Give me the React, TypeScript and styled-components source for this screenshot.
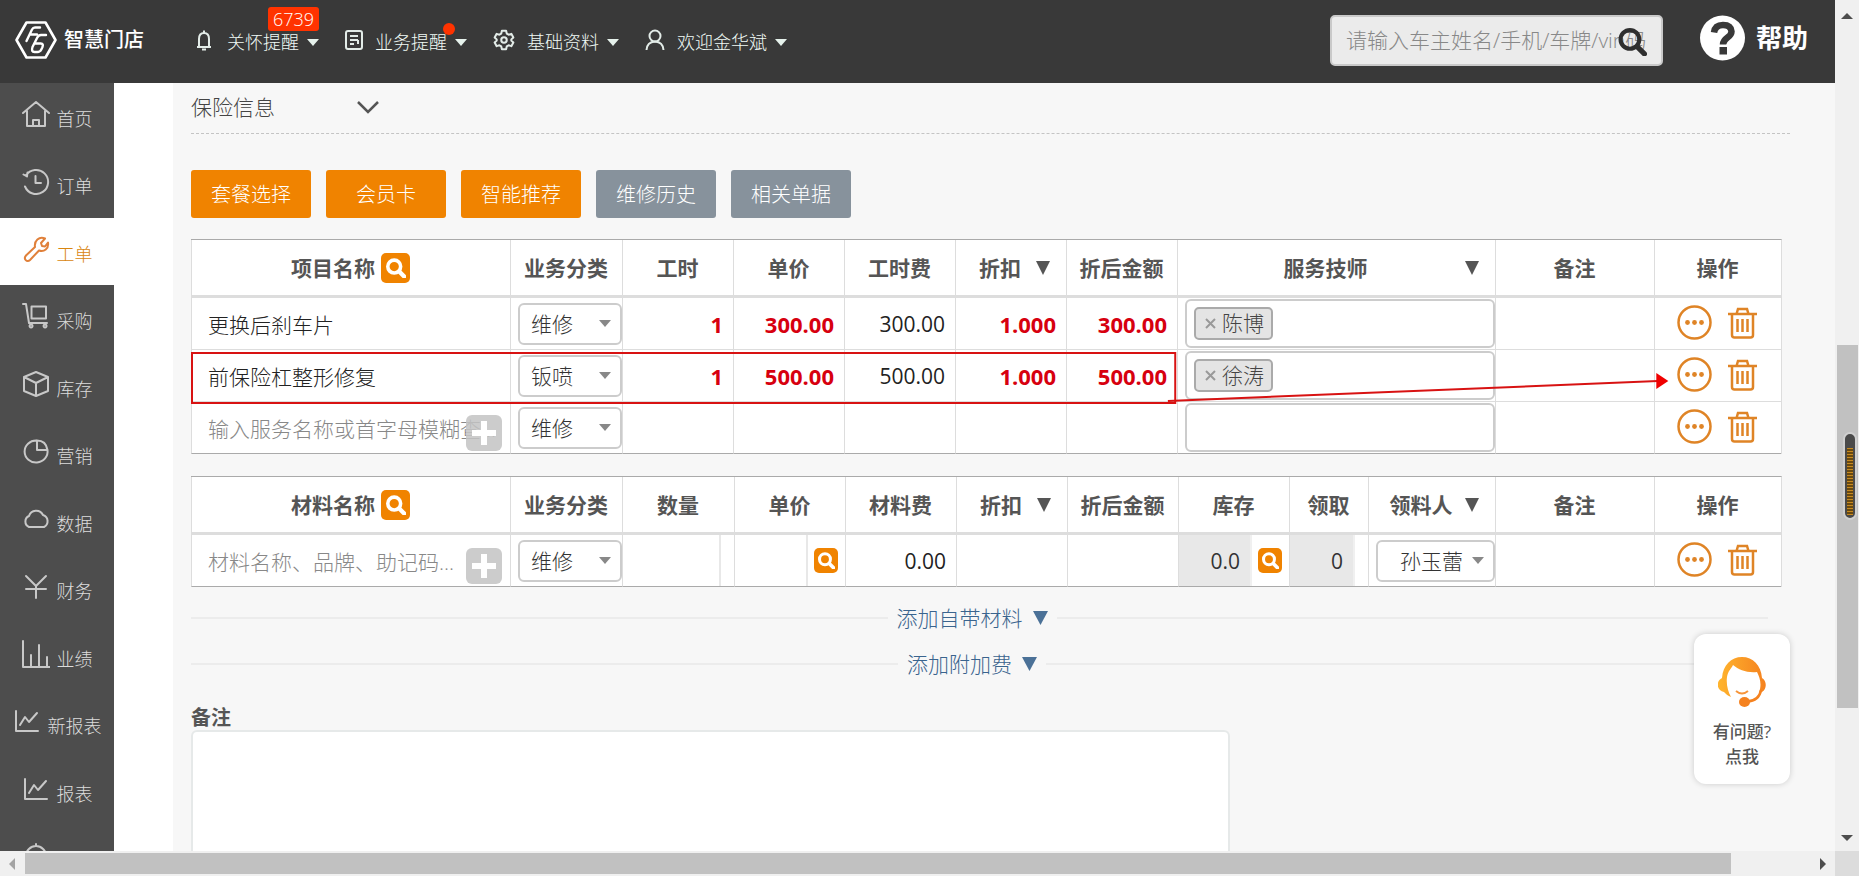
import React from 'react';
import styled, { createGlobalStyle, css } from 'styled-components';

const orange = '#f08300';
const actionOrange = '#df8426';

const GlobalStyle = createGlobalStyle`
  *, *::before, *::after { box-sizing: border-box; }
  body { margin: 0; overflow: hidden; }
  body, button, input, select, textarea {
    font-family: "Open Sans", "Noto Sans CJK SC", sans-serif;
    font-weight: 300;
  }
  button { border: 0; padding: 0; background: none; cursor: pointer; }
  svg { display: block; flex: none; }
`;

/* ---------- frame ---------- */

const Frame = styled.div`
  display: grid;
  grid-template-columns: minmax(0, 1fr) 24px;
  grid-template-rows: minmax(0, 1fr) 25px;
  height: 100vh;
`;

const Screen = styled.div`
  position: relative;
  display: flex;
  flex-direction: column;
  overflow: hidden;
  background: #f7f7f7;
`;

const Track = styled.div<{ $vertical?: boolean }>`
  display: flex;
  flex-direction: ${p => (p.$vertical ? 'column' : 'row')};
  align-items: center;
  background: #f0f0f0;
  padding: ${p => (p.$vertical ? '10px 0 7px' : '0 6px')};
`;

const Corner = styled.div`
  background: #dcdcdc;
`;

const VerticalThumb = styled.div`
  display: flex;
  justify-content: flex-end;
  width: 21px;
  height: 363px;
  padding: 87px 1px 0 0;
  background: #c1c1c1;
`;

const HorizontalThumb = styled.div`
  flex: 1;
  height: 21px;
  margin: 0 86px 0 7px;
  background: #c1c1c1;
`;

const Grow = styled.div<{ $by: number }>`
  flex: ${p => p.$by};
`;

const Meter = styled.div`
  width: 14px;
  height: 88px;
  padding: 14px 2px 3px;
  border: 2px solid #d0d0d0;
  border-radius: 7px;
  background: #4a4a4a;

  &::after {
    content: "";
    display: block;
    height: 100%;
    background: repeating-linear-gradient(#c88a20 0 1px, #6a4a10 1px 3px);
  }
`;

/* ---------- top bar ---------- */

const TopBar = styled.header`
  display: flex;
  align-items: center;
  flex: none;
  height: 83px;
  padding: 0 27px 0 15px;
  background: #393939;
  color: #fff;
`;

const Brand = styled.a`
  display: flex;
  align-items: center;
  gap: 7px;
  width: 178px;
  padding-bottom: 3px;
  color: #fff;
  font-size: 20px;
  font-weight: 500;
  line-height: 24px;
  text-decoration: none;
`;

const Menu = styled.nav`
  display: flex;
  gap: 26px;
`;

const MenuButton = styled.button`
  position: relative;
  display: flex;
  align-items: center;
  color: #f0faf5;
  font-size: 18px;
  line-height: 24px;

  svg:first-child { margin: 0 12px 4px 0; }
  svg:last-child { margin: 2px 0 0 8px; }
`;

const CountBadge = styled.span`
  position: absolute;
  right: 0;
  top: -22px;
  padding: 0 5px;
  border-radius: 3px;
  background: #ff3300;
  color: #fff;
  font-size: 18px;
  line-height: 24px;
`;

const Dot = styled.span`
  position: absolute;
  right: 12px;
  top: -6px;
  width: 12px;
  height: 12px;
  border-radius: 50%;
  background: #ff3300;
`;

const Search = styled.form`
  position: relative;
  width: 333px;
  margin: 0 37px 2px auto;
`;

const SearchInput = styled.input`
  display: block;
  width: 100%;
  height: 51px;
  padding: 0 15px 2px 14px;
  border: 2px solid #c9c9c9;
  border-radius: 5px;
  background: #ebebeb;
  color: #333;
  font-size: 21px;

  &::placeholder { color: #888; }
`;

const SearchButton = styled.button`
  position: absolute;
  right: 16px;
  top: 12px;
`;

const Help = styled.a`
  display: flex;
  align-items: center;
  gap: 11px;
  padding-bottom: 8px;
  color: #fff;
  font-size: 26px;
  font-weight: 700;
  line-height: 36px;
  text-decoration: none;
`;

/* ---------- side bar ---------- */

const Body = styled.div`
  display: flex;
  flex: 1;
  min-height: 0;
`;

const Side = styled.nav`
  width: 114px;
  flex: none;
  overflow: hidden;
  background: #4d4d4d;
`;

const SideItem = styled.a<{ $active?: boolean; $bare?: boolean }>`
  display: flex;
  align-items: center;
  justify-content: ${p => (p.$bare ? 'flex-start' : 'center')};
  gap: 7px;
  height: 68px;
  padding-left: ${p => (p.$bare ? 22 : 0)}px;
  background: ${p => (p.$active ? '#fff' : 'transparent')};
  color: ${p => (p.$active ? '#d9860f' : '#dcdcdc')};
  font-size: 18px;
  line-height: 24px;
  text-decoration: none;

  &:nth-child(odd) { height: 67px; }
  svg { margin-bottom: 6px; color: ${p => (p.$active ? '#e0803a' : '#c8c8c8')}; }
  span { margin-top: 4px; }
`;

const Gutter = styled.div`
  width: 59px;
  flex: none;
  background: #fff;
`;

/* ---------- main column ---------- */

const Main = styled.main`
  flex: 1;
  min-width: 0;
  padding: 0 45px 0 18px;
`;

const SectionToggle = styled.button`
  display: flex;
  align-items: center;
  gap: 82px;
  width: 100%;
  height: 51px;
  padding-bottom: 2px;
  border-bottom: 1px dashed #c4c4c4;
  color: #444;
  font-size: 21px;
  line-height: 30px;
`;

const Actions = styled.div`
  display: flex;
  gap: 15px;
  margin: 36px 0 21px;
`;

const ActionButton = styled.button<{ $muted?: boolean }>`
  width: 120px;
  height: 48px;
  padding-bottom: 2px;
  border-radius: 3px;
  background: ${p => (p.$muted ? '#87929c' : orange)};
  color: #fff;
  font-size: 20px;
`;

const Tables = styled.div`
  display: flex;
  flex-direction: column;
  gap: 22px;
  margin-right: 8px;
`;

const TableBox = styled.div`
  position: relative;
`;

const Grid = styled.table`
  width: 100%;
  table-layout: fixed;
  border-collapse: separate;
  border-spacing: 0;
  border-top: 1px solid #aaa;
  border-right: 1px solid #ddd;
  background: #fff;
  color: #222;
  font-size: 21px;
  line-height: 28px;

  tbody tr:last-child td { border-bottom-color: #aaa; }
`;

const Th = styled.th`
  height: 58px;
  padding: 0;
  border-left: 1px solid #ddd;
  border-bottom: 3px solid #ddd;
  color: #555;
  font-weight: 700;
`;

const HeadLine = styled.div<{ $sortable?: boolean }>`
  display: flex;
  align-items: center;
  justify-content: center;
  gap: 6px;
  padding-right: 1px;

  ${p => p.$sortable && css`
    gap: 0;
    padding: 0 16px 0 8px;
    span { flex: 1; }
  `}
`;

const Td = styled.td`
  position: relative;
  height: 52px;
  padding: 0;
  border-left: 1px solid #ddd;
  border-bottom: 1px solid #ddd;
`;

const NameCell = styled(Td)`
  padding: 2px 0 0 16px;
`;

const NumCell = styled(Td)<{ $strong?: boolean }>`
  padding-right: 10px;
  text-align: right;
  font-weight: 400;
  ${p => p.$strong && css`
    color: #d7000f;
    font-size: 22px;
    font-weight: 700;
  `}
`;

const NameInput = styled.input`
  display: block;
  width: 100%;
  height: 51px;
  padding: 2px 10px 0 16px;
  border: 0;
  background: none;
  font-size: 21px;
  text-overflow: ellipsis;

  &::placeholder { color: #888; }
`;

const PlusButton = styled.button`
  position: absolute;
  right: 8px;
  bottom: 2px;
  display: grid;
  place-items: center;
  width: 36px;
  height: 36px;
  border-radius: 6px;
  background: rgba(196, 196, 196, 0.86);
`;

const SelectBox = styled.div`
  position: relative;
  margin-left: 7px;

  svg {
    position: absolute;
    right: 11px;
    top: 17px;
    pointer-events: none;
  }
`;

const Select = styled.select<{ $indent?: boolean }>`
  display: block;
  width: 100%;
  height: 42px;
  padding: 0 0 0 ${p => (p.$indent ? 22 : 11)}px;
  border: 2px solid #ccc;
  border-radius: 6px;
  appearance: none;
  background: #fff;
  color: #333;
  font-size: 21px;
`;

const TechBox = styled.div`
  display: flex;
  align-items: center;
  height: 49px;
  margin-left: 7px;
  padding: 0 7px;
  border: 2px solid #ccc;
  border-radius: 6px;
  background: #fff;
`;

const Tag = styled.span`
  display: flex;
  align-items: center;
  gap: 6px;
  height: 33px;
  margin-bottom: 1px;
  padding: 0 7px 0 9px;
  border: 2px solid #aaa;
  border-radius: 5px;
  background: #e4e4e4;
  color: #444;
`;

const RowActions = styled.div`
  display: flex;
  align-items: center;
  gap: 16px;
  padding: 0 0 2px 22px;
`;

const Split = styled.div`
  display: flex;
  align-items: center;
  height: 51px;
`;

const SplitField = styled.input<{ $filled?: boolean; $tail: number }>`
  flex: 1;
  min-width: 0;
  height: 51px;
  margin-right: ${p => p.$tail}px;
  padding: 0 10px;
  border: 0;
  border-right: 2px solid ${p => (p.$filled ? '#f0f0f0' : '#e8e8e8')};
  background: ${p => (p.$filled ? '#e8e8e8' : '#fff')};
  color: #333;
  font-size: 21px;
  font-weight: 400;
  text-align: right;
`;

const SearchBadge = styled.button<{ $small?: boolean }>`
  display: grid;
  place-items: center;
  width: ${p => (p.$small ? 24 : 29)}px;
  height: ${p => (p.$small ? 25 : 30)}px;
  margin-right: ${p => (p.$small ? 7 : 0)}px;
  border-radius: 5px;
  background: ${orange};
`;

const Annotation = styled.svg`
  position: absolute;
  inset: 0;
  width: 100%;
  height: 100%;
  overflow: visible;
  pointer-events: none;
`;

const Adders = styled.div`
  display: flex;
  flex-direction: column;
  gap: 16px;
  margin: 16px 22px 0 0;
`;

const Adder = styled.div`
  display: flex;
  align-items: center;
  gap: 9px;

  &::before, &::after {
    content: "";
    flex: 1 1 0;
    height: 2px;
    background: #ececec;
  }
  &::after { flex-basis: 15px; }
`;

const AdderButton = styled.button`
  display: flex;
  align-items: center;
  gap: 10px;
  color: #3a648e;
  font-size: 21px;
  line-height: 30px;
`;

const NoteLabel = styled.label`
  display: block;
  margin-top: 26px;
  color: #555;
  font-size: 20px;
  font-weight: 700;
  line-height: 25px;
`;

const Note = styled.textarea`
  display: block;
  width: 65%;
  height: 180px;
  border: 2px solid #e6e9e9;
  border-radius: 6px;
  background: #fff;
  resize: none;
`;

const Support = styled.button`
  position: absolute;
  right: 45px;
  bottom: 67px;
  display: flex;
  flex-direction: column;
  align-items: center;
  gap: 12px;
  width: 96px;
  height: 150px;
  padding-top: 23px;
  border-radius: 12px;
  background: #fff;
  box-shadow: 0 0 6px rgba(0, 0, 0, 0.18);
  color: #555;
  font-size: 17px;
  font-weight: 500;
  line-height: 25px;
`;

/* ---------- drawings ---------- */

const Triangle = ({ w = 14, h = 14, color = '#555' }: { w?: number; h?: number; color?: string }) => (
  <svg width={w} height={h} viewBox="0 0 14 14" preserveAspectRatio="none"><path d="M0 0h14L7 14z" fill={color} /></svg>
);

const Arrow = ({ turn, color = '#4d4d4d' }: { turn: number; color?: string }) => (
  <svg width="12" height="12" viewBox="0 0 12 12"><path d="M0 9 6 3l6 6z" fill={color} transform={`rotate(${turn} 6 6)`} /></svg>
);

const Magnifier = ({ size, color = '#fff', width = 4 }: { size: number; color?: string; width?: number }) => (
  <svg width={size} height={size} viewBox="0 0 28 28" fill="none" stroke={color} strokeWidth={width} strokeLinecap="round">
    <circle cx="11.500" cy="12" r="9" /><path d="m18.500 19 7 7" strokeWidth={width + 1} />
  </svg>
);

const Logo = () => (
  <svg width="42" height="38" viewBox="0 0 42 38" fill="none" stroke="#fff" strokeLinejoin="round" strokeLinecap="round">
    <path d="M11.500 1.500h19L40.500 19l-10 17.500h-19L1.500 19z" strokeWidth="2.600" />
    <path d="M25 6.500h-5q-2 0-3 2L11.500 20M15 13.500h7" strokeWidth="2.400" />
    <path d="M31 14h-5q-2.500 0-3.700 2.500L17.500 26q-1.600 5 2 5h3q2.500 0 3.800-2.500l1-2q1.600-4-1.500-4h-6" strokeWidth="2.400" />
  </svg>
);

const QuestionDisc = () => (
  <svg width="45" height="46" viewBox="0 0 45 46" fill="none">
    <circle cx="22.500" cy="23" r="22.500" fill="#fff" />
    <path d="M14 17.500q1-7.500 9-7.500t8.500 6.500c0 6.500-8.500 6-8.500 13" stroke="#393939" strokeWidth="6.500" />
    <rect x="19.500" y="32" width="7.500" height="7.500" fill="#393939" />
  </svg>
);

const menuIcons = {
  bell: (
    <svg width="22" height="22" viewBox="0 0 22 22" fill="none" stroke="#e3ece8" strokeWidth="2">
      <path d="M4 18h14M6 18V10q0-6 5-6t5 6v8M11 4V1.500M9 20.500h4" />
    </svg>
  ),
  doc: (
    <svg width="18" height="22" viewBox="0 0 18 22" fill="none" stroke="#e3ece8" strokeWidth="2">
      <rect x="1" y="2" width="16" height="18" rx="2" /><path d="M5 7h8M5 11h8M5 15h4M13 11v4" />
    </svg>
  ),
  gear: (
    <svg width="22" height="22" viewBox="0 0 24 24" fill="none" stroke="#e3ece8" strokeWidth="2.200" strokeLinejoin="round">
      <path d="M9.700 2h4.600l.7 3 2 1.200 3-.9 2.200 3.900L20 11.300v1.400l2.200 2.100-2.200 3.900-3-.9-2 1.200-.7 3H9.700L9 19l-2-1.200-3 .9-2.200-3.900L4 12.700v-1.400L1.800 9.200 4 5.300l3 .9L9 5z" />
      <circle cx="12" cy="12" r="3" />
    </svg>
  ),
  user: (
    <svg width="20" height="22" viewBox="0 0 20 22" fill="none" stroke="#e3ece8" strokeWidth="2">
      <circle cx="10" cy="7" r="5.500" /><path d="M1.500 21q.5-8 8.500-8.500 8 .5 8.500 8.500" />
    </svg>
  ),
};

const SideIcon = ({ d }: { d: string }) => (
  <svg width="28" height="28" viewBox="0 0 28 28" fill="none" stroke="currentColor" strokeWidth="2" strokeLinejoin="round" strokeLinecap="round">
    <path d={d} />
  </svg>
);

const More = () => (
  <svg width="35" height="35" viewBox="0 0 35 35" fill={actionOrange}>
    <circle cx="17.500" cy="17.500" r="16" fill="none" stroke={actionOrange} strokeWidth="2.500" />
    <circle cx="10.500" cy="17.500" r="2.400" /><circle cx="17.500" cy="17.500" r="2.400" /><circle cx="24.500" cy="17.500" r="2.400" />
  </svg>
);

const Trash = () => (
  <svg width="29" height="32" viewBox="0 0 29 32" fill="none" stroke={actionOrange} strokeWidth="2.500">
    <path d="M0 7h29M8.500 7l1.500-5h9l1.500 5M4 7v21q0 2.500 2.500 2.500h16q2.500 0 2.500-2.500V7M9.500 12v13M14.500 12v13M19.500 12v13" />
  </svg>
);

const Plus = () => (
  <svg width="24" height="24" viewBox="0 0 24 24"><path d="M9 0h6v9h9v6h-9v9H9v-9H0V9h9z" fill="#fff" /></svg>
);

const Agent = () => (
  <svg width="48" height="50" viewBox="0 0 48 50">
    <defs>
      <linearGradient id="hair" x1="0" x2="1"><stop offset="0" stopColor="#ffb52e" /><stop offset="1" stopColor="#f5821f" /></linearGradient>
    </defs>
    <path d="M4 21C5 8 13 0 24 0s19 8 20 21c5 3 5 11 0 14l-3 1c3-9 1-15-2-21-10 1-18-2-24-7-2 4-5 6-6 12-1 7 1 15 4 20-3-1-5-3-7-5-8-2-8-11-2-14z" fill="url(#hair)" />
    <path d="M43 33c-1 6-5 11-14 11.500" fill="none" stroke="#f5821f" strokeWidth="2.500" />
    <ellipse cx="26.500" cy="45" rx="5.500" ry="5" fill="#f5821f" />
    <path d="M18 34q6 5 12 0" fill="none" stroke="#f7953a" strokeWidth="2" />
  </svg>
);

/* ---------- data ---------- */

const sideItems: { label: string; d: string; active?: boolean }[] = [
  { label: '首页', d: 'M1 13 14 2l13 11M5 11v15h18V11M11 26v-6h6v6' },
  { label: '订单', d: 'M3 19.500A12 12 0 1 0 4 8.500M1.500 7.500l3.500 2 .5-4M13.500 9v7H19' },
  { label: '工单', active: true, d: 'M23 3.500l-4 4.500 1 3 3 .5 3-4c1 6-4 10-9 8L8 25c-3 3-7-1-4-4.500l9-8.500C12 6 17 1 23 3.500z' },
  { label: '采购', d: 'M1 2h3l3 19h18M9.500 4.500H24v12H9.500zM9 22.500a1.500 1.500 0 1 0 .1 0M23 22.500a1.500 1.500 0 1 0 .1 0' },
  { label: '库存', d: 'M14 2 26 7v14l-12 5L2 21V7zM2 7l12 6 12-6M14 13v13' },
  { label: '营销', d: 'M14.500 3.500a11.500 11 0 1 0 11 9.500H15V3.500q9 0 10.500 9.500' },
  { label: '数据', d: 'M7 22a6 6 0 0 1 0-11 7.500 7.500 0 0 1 14-1 6.500 6.500 0 0 1 1 12z' },
  { label: '财务', d: 'M4 4l10 10L24 4M14 14v12M4 17h20' },
  { label: '业绩', d: 'M1 1v26h27M9 15v11M17 5v21M25 17v9' },
  { label: '新报表', d: 'M3 4v20h22M7 18l5-8 4 5 8-9' },
  { label: '报表', d: 'M3 4v20h22M7 18l5-8 4 5 8-9' },
];

const laborColumns = [
  { label: '项目名称', width: 319, search: true },
  { label: '业务分类', width: 112 },
  { label: '工时', width: 111 },
  { label: '单价', width: 111 },
  { label: '工时费', width: 111 },
  { label: '折扣', width: 111, sortable: true },
  { label: '折后金额', width: 111 },
  { label: '服务技师', width: 318, sortable: true },
  { label: '备注', width: 159 },
  { label: '操作', width: 127 },
];

const partColumns = [
  { label: '材料名称', width: 319, search: true },
  { label: '业务分类', width: 112 },
  { label: '数量', width: 112 },
  { label: '单价', width: 111 },
  { label: '材料费', width: 111 },
  { label: '折扣', width: 111, sortable: true },
  { label: '折后金额', width: 111 },
  { label: '库存', width: 111 },
  { label: '领取', width: 79 },
  { label: '领料人', width: 127, sortable: true },
  { label: '备注', width: 159 },
  { label: '操作', width: 127 },
];

const laborRows = [
  { name: '更换后刹车片', kind: '维修', price: '300.00', tech: '陈博' },
  { name: '前保险杠整形修复', kind: '钣喷', price: '500.00', tech: '徐涛' },
];

/* ---------- pieces ---------- */

type Column = { label: string; width: number; search?: boolean; sortable?: boolean };

const Head = ({ columns }: { columns: Column[] }) => (
  <>
    <colgroup>{columns.map(c => <col key={c.label} style={{ width: c.width }} />)}</colgroup>
    <thead>
      <tr>
        {columns.map(c => (
          <Th key={c.label} scope="col">
            <HeadLine $sortable={c.sortable}>
              <span>{c.label}</span>
              {c.search && <SearchBadge aria-label={`搜索${c.label}`}><Magnifier size={20} width={5} /></SearchBadge>}
              {c.sortable && <Triangle />}
            </HeadLine>
          </Th>
        ))}
      </tr>
    </thead>
  </>
);

const Picker = ({ value, label, indent }: { value: string; label: string; indent?: boolean }) => (
  <SelectBox>
    <Select aria-label={label} defaultValue={value} $indent={indent}><option>{value}</option></Select>
    <Triangle w={12} h={7} color="#888" />
  </SelectBox>
);

const Tools = () => (
  <RowActions>
    <button aria-label="更多"><More /></button>
    <button aria-label="删除"><Trash /></button>
  </RowActions>
);

const MenuEntry = ({ icon, label, children }: { icon: keyof typeof menuIcons; label: string; children?: React.ReactNode }) => (
  <MenuButton>
    {menuIcons[icon]}
    {label}
    {children}
    <Triangle w={12} h={7} color="#e6f2ec" />
  </MenuButton>
);

export default function App() {
  return (
    <Frame>
      <GlobalStyle />
      <Screen>
        <TopBar>
          <Brand href="#"><Logo />智慧门店</Brand>
          <Menu>
            <MenuEntry icon="bell" label="关怀提醒"><CountBadge>6739</CountBadge></MenuEntry>
            <MenuEntry icon="doc" label="业务提醒"><Dot /></MenuEntry>
            <MenuEntry icon="gear" label="基础资料" />
            <MenuEntry icon="user" label="欢迎金华斌" />
          </Menu>
          <Search>
            <SearchInput aria-label="搜索" placeholder="请输入车主姓名/手机/车牌/vin码" />
            <SearchButton type="button" aria-label="搜索"><Magnifier size={29} color="#2f2f2f" /></SearchButton>
          </Search>
          <Help href="#"><QuestionDisc />帮助</Help>
        </TopBar>

        <Body>
          <Side>
            {sideItems.map(item => (
              <SideItem key={item.label} href="#" $active={item.active}>
                <SideIcon d={item.d} />
                <span>{item.label}</span>
              </SideItem>
            ))}
            <SideItem href="#" aria-label="更多" $bare>
              <SideIcon d="M14 2v2M4 14a10 10 0 1 1 20 0 10 10 0 1 1-20 0" />
            </SideItem>
          </Side>
          <Gutter />
          <Main>
            <SectionToggle>
              保险信息
              <svg width="22" height="14" viewBox="0 0 22 14" fill="none" stroke="#555" strokeWidth="2.500"><path d="m1 2 10 10L21 2" /></svg>
            </SectionToggle>

            <Actions>
              <ActionButton>套餐选择</ActionButton>
              <ActionButton>会员卡</ActionButton>
              <ActionButton>智能推荐</ActionButton>
              <ActionButton $muted>维修历史</ActionButton>
              <ActionButton $muted>相关单据</ActionButton>
            </Actions>

            <Tables>
              <TableBox>
                <Grid>
                  <Head columns={laborColumns} />
                  <tbody>
                    {laborRows.map(row => (
                      <tr key={row.name}>
                        <NameCell>{row.name}</NameCell>
                        <Td><Picker value={row.kind} label="业务分类" /></Td>
                        <NumCell $strong>1</NumCell>
                        <NumCell $strong>{row.price}</NumCell>
                        <NumCell>{row.price}</NumCell>
                        <NumCell $strong>1.000</NumCell>
                        <NumCell $strong>{row.price}</NumCell>
                        <Td>
                          <TechBox>
                            <Tag>
                              <button aria-label={`移除${row.tech}`}>
                                <svg width="11" height="11" viewBox="0 0 11 11" stroke="#999" strokeWidth="2"><path d="m1 1 9 9M10 1l-9 9" /></svg>
                              </button>
                              {row.tech}
                            </Tag>
                          </TechBox>
                        </Td>
                        <Td />
                        <Td><Tools /></Td>
                      </tr>
                    ))}
                    <tr>
                      <Td>
                        <NameInput aria-label="项目名称" placeholder="输入服务名称或首字母模糊查..." />
                        <PlusButton aria-label="添加项目"><Plus /></PlusButton>
                      </Td>
                      <Td><Picker value="维修" label="业务分类" /></Td>
                      <Td /><Td /><Td /><Td /><Td />
                      <Td><TechBox /></Td>
                      <Td />
                      <Td><Tools /></Td>
                    </tr>
                  </tbody>
                </Grid>
                <Annotation>
                  <rect x="1" y="114" width="61.800%" height="50" fill="none" stroke="#d81212" strokeWidth="2" />
                  <line x1="61.400%" y1="162" x2="92.200%" y2="142" stroke="#d81212" strokeWidth="2" />
                  <svg x="92.100%" y="134" overflow="visible"><path d="M0 0 12 8 0 16z" fill="#f00000" /></svg>
                </Annotation>
              </TableBox>

              <Grid>
                <Head columns={partColumns} />
                <tbody>
                  <tr>
                    <Td>
                      <NameInput aria-label="材料名称" placeholder="材料名称、品牌、助记码..." />
                      <PlusButton aria-label="添加材料"><Plus /></PlusButton>
                    </Td>
                    <Td><Picker value="维修" label="业务分类" /></Td>
                    <Td><Split><SplitField aria-label="数量" $tail={13} /></Split></Td>
                    <Td>
                      <Split>
                        <SplitField aria-label="单价" $tail={6} />
                        <SearchBadge $small aria-label="查询单价"><Magnifier size={17} width={5} /></SearchBadge>
                      </Split>
                    </Td>
                    <NumCell>0.00</NumCell>
                    <Td /><Td />
                    <Td>
                      <Split>
                        <SplitField aria-label="库存" $filled $tail={6} defaultValue="0.0" readOnly />
                        <SearchBadge $small aria-label="查询库存"><Magnifier size={17} width={5} /></SearchBadge>
                      </Split>
                    </Td>
                    <Td><Split><SplitField aria-label="领取" $filled $tail={13} defaultValue="0" readOnly /></Split></Td>
                    <Td><Picker value="孙玉蕾" label="领料人" indent /></Td>
                    <Td />
                    <Td><Tools /></Td>
                  </tr>
                </tbody>
              </Grid>
            </Tables>

            <Adders>
              <Adder><AdderButton>添加自带材料<Triangle w={15} color="#4b7197" /></AdderButton></Adder>
              <Adder><AdderButton>添加附加费<Triangle w={15} color="#4b7197" /></AdderButton></Adder>
            </Adders>

            <NoteLabel htmlFor="note">备注</NoteLabel>
            <Note id="note" />
          </Main>
        </Body>

        <Support>
          <Agent />
          <span>有问题?<br />点我</span>
        </Support>
      </Screen>

      <Track $vertical>
        <Arrow turn={0} />
        <Grow $by={323} />
        <VerticalThumb><Meter /></VerticalThumb>
        <Grow $by={124} />
        <Arrow turn={180} />
      </Track>
      <Track>
        <Arrow turn={270} color="#a3a3a3" />
        <HorizontalThumb />
        <Arrow turn={90} />
      </Track>
      <Corner />
    </Frame>
  );
}
